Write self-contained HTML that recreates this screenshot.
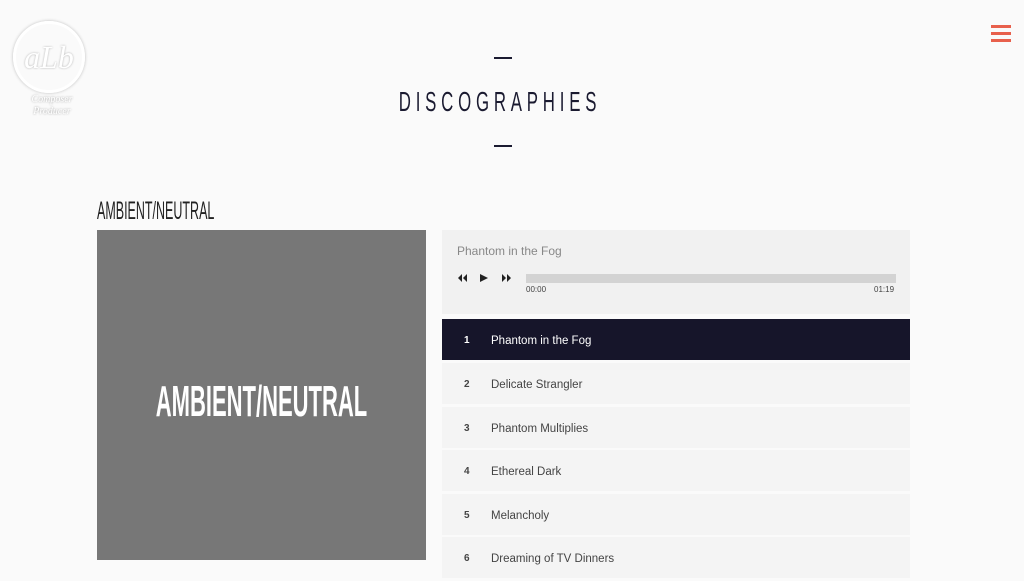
<!DOCTYPE html>
<html><head><style>
body{margin:0;width:1024px;height:580px;overflow:hidden;background:#fafafa;font-family:"Liberation Sans",sans-serif;position:relative}
.abs{position:absolute}
.logo{left:13px;top:21px;width:66px;height:66px;border:3px solid #fff;border-radius:50%;box-shadow:0 0 3px rgba(0,0,0,.25);text-align:center;color:#fff;font:italic 32px "Liberation Serif",serif;line-height:66px;text-shadow:0 0 2px rgba(0,0,0,.3)}
.sub{left:22px;top:94px;width:60px;color:#fff;font:italic 10px "Liberation Serif",serif;text-align:center;text-shadow:0 0 2px rgba(0,0,0,.4);line-height:12px}
.burger{left:991px;top:25px;width:20px}
.burger div{height:3px;background:#e8604c;margin-bottom:4px}
.dash{width:18px;height:2px;background:#1a1a30;left:494px}
.title{left:300px;width:400px;top:86px;text-align:center;font-size:28px;letter-spacing:8px;color:#1a1a30;transform:scaleX(.6);}
.h2{left:97px;top:197px;font-size:25px;color:#222;transform:scaleX(.5);transform-origin:left;white-space:nowrap}
.art{left:97px;top:230px;width:329px;height:330px;background:#777}
.art span{position:absolute;left:-200px;right:-200px;top:147px;text-align:center;color:#fff;font-size:44px;font-weight:bold;transform:scaleX(.5);white-space:nowrap}
.player{left:442px;top:230px;width:468px;height:84px;background:#f1f1f1}
.tr{left:442px;width:468px;height:41px;background:#f4f4f4;font-size:11.5px;color:#444;line-height:44px}
.tr b{position:absolute;left:22px;font-size:10px}
.tr i{position:absolute;left:49px;font-style:normal}
</style></head><body>
<div class="abs logo">aLb</div>
<div class="abs sub">Composer<br>Producer</div>
<div class="abs burger"><div></div><div></div><div></div></div>
<div class="abs dash" style="top:57px"></div>
<div class="abs title">DISCOGRAPHIES</div>
<div class="abs dash" style="top:145px"></div>
<div class="abs h2">AMBIENT/NEUTRAL</div>
<div class="abs art"><span>AMBIENT/NEUTRAL</span></div>
<div class="abs player">
<div class="abs" style="left:15px;top:14px;font-size:12px;color:#888">Phantom in the Fog</div>
<svg class="abs" style="left:15px;top:43px" width="60" height="10"><path d="M5 1L1 5 5 9ZM10 1L6 5 10 9Z" fill="#222"/><path d="M23 1L31 5 23 9Z" fill="#222"/><path d="M45 1L49 5 45 9ZM50 1L54 5 50 9Z" fill="#222"/></svg>
<div class="abs" style="left:84px;top:44px;width:370px;height:9px;background:#d3d3d3"></div>
<div class="abs" style="left:84px;top:55px;font-size:8px;color:#444">00:00</div>
<div class="abs" style="left:432px;top:55px;font-size:8px;color:#444">01:19</div>
</div>
<div class="abs tr" style="top:319px;background:#16152a;color:#fff"><b>1</b><i>Phantom in the Fog</i></div>
<div class="abs tr" style="top:363px"><b>2</b><i>Delicate Strangler</i></div>
<div class="abs tr" style="top:407px"><b>3</b><i>Phantom Multiplies</i></div>
<div class="abs tr" style="top:450px"><b>4</b><i>Ethereal Dark</i></div>
<div class="abs tr" style="top:494px"><b>5</b><i>Melancholy</i></div>
<div class="abs tr" style="top:537px"><b>6</b><i>Dreaming of TV Dinners</i></div>
</body></html>
